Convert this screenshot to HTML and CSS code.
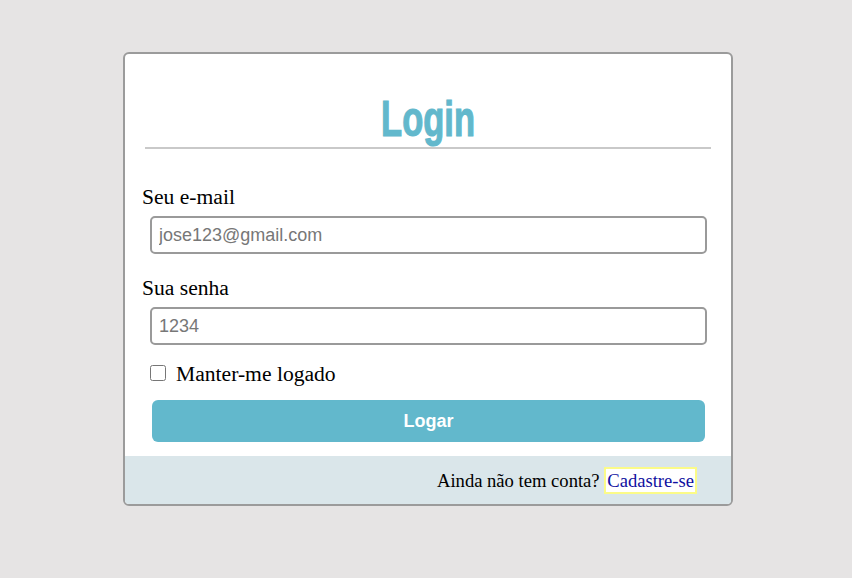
FILE: index.html
```html
<!DOCTYPE html>
<html lang="pt-BR">
<head>
<meta charset="utf-8">
<title>Login</title>
<link rel="stylesheet" href="styles.css">
</head>
<body>
<div class="card">
  <div class="card-body">
    <h1 class="title"><span class="title-text">Login</span></h1>
    <form class="form">
      <div class="field">
        <label class="field-label" for="email">Seu e-mail</label>
        <input class="field-input" id="email" type="email" placeholder="jose123@gmail.com">
      </div>
      <div class="field">
        <label class="field-label" for="senha">Sua senha</label>
        <input class="field-input" id="senha" type="password" placeholder="1234">
      </div>
      <label class="remember"><input class="remember-box" type="checkbox"><span>Manter-me logado</span></label>
      <button class="submit" type="button">Logar</button>
    </form>
  </div>
  <div class="card-footer">
    <p class="footer-text">Ainda não tem conta? <a class="signup" href="#">Cadastre-se</a></p>
  </div>
</div>
</body>
</html>
```

FILE: styles.css
```css
html, body {
  margin: 0;
  padding: 0;
}
body {
  background: #e6e4e4;
  font-family: "Liberation Serif", "Times New Roman", serif;
  padding-top: 52px;
  height: 578px;
  box-sizing: border-box;
}
.card {
  width: 610px;
  margin-left: 123px;
  box-sizing: border-box;
  background: #fff;
  border: 2px solid #9b9b9b;
  border-radius: 6px;
  overflow: hidden;
}
.card-body {
  padding: 0 20px 14px;
}
.title {
  margin: 0;
  height: 95px;
  box-sizing: border-box;
  border-bottom: 2px solid #c9c9c9;
  text-align: center;
  color: #62b8cc;
  font-family: "Liberation Sans", Arial, sans-serif;
  font-weight: bold;
  font-size: 50px;
  line-height: 50px;
  padding-top: 40px;
}
.title-text {
  display: inline-block;
  transform: scaleX(0.69);
  -webkit-text-stroke: 1.2px #62b8cc;
}
.form {
  display: flex;
  flex-direction: column;
  padding-top: 36px;
}
.field {
  display: flex;
  flex-direction: column;
  margin-bottom: 22px;
}
.field-label {
  font-size: 21.6px;
  line-height: 25px;
  margin-left: -3px;
  margin-bottom: 6px;
  color: #000;
}
.field-input {
  margin: 0 4px 0 5px;
  height: 38px;
  box-sizing: border-box;
  border: 2px solid #9a9a9a;
  border-radius: 5px;
  padding: 0 7px;
  font-family: "Liberation Sans", Arial, sans-serif;
  font-size: 18px;
  color: #333;
  outline: none;
}
.field-input::placeholder {
  color: #777;
}
.remember {
  display: flex;
  align-items: center;
  margin: -5px 0 0 5px;
  height: 25px;
  font-size: 21.6px;
  color: #000;
}
.remember-box {
  margin: 0 10px 0 0;
  width: 16px;
  height: 16px;
  position: relative;
  top: -2px;
}
.submit {
  margin: 13px 6px 0 7px;
  height: 42px;
  border: 0;
  border-radius: 6px;
  background: #62b8cc;
  color: #fff;
  font-family: "Liberation Sans", Arial, sans-serif;
  font-weight: bold;
  font-size: 18px;
  padding: 0;
}
.card-footer {
  background: #dae6ea;
  height: 48px;
  box-sizing: border-box;
  padding: 12px 34px 0 0;
}
.footer-text {
  margin: 0;
  text-align: right;
  font-size: 18.6px;
  line-height: 25px;
  color: #000;
}
.signup {
  color: #1010a0;
  text-decoration: none;
  background: #fff;
  border: 2px solid #fbfb88;
  padding: 1px 1px;
}
```
